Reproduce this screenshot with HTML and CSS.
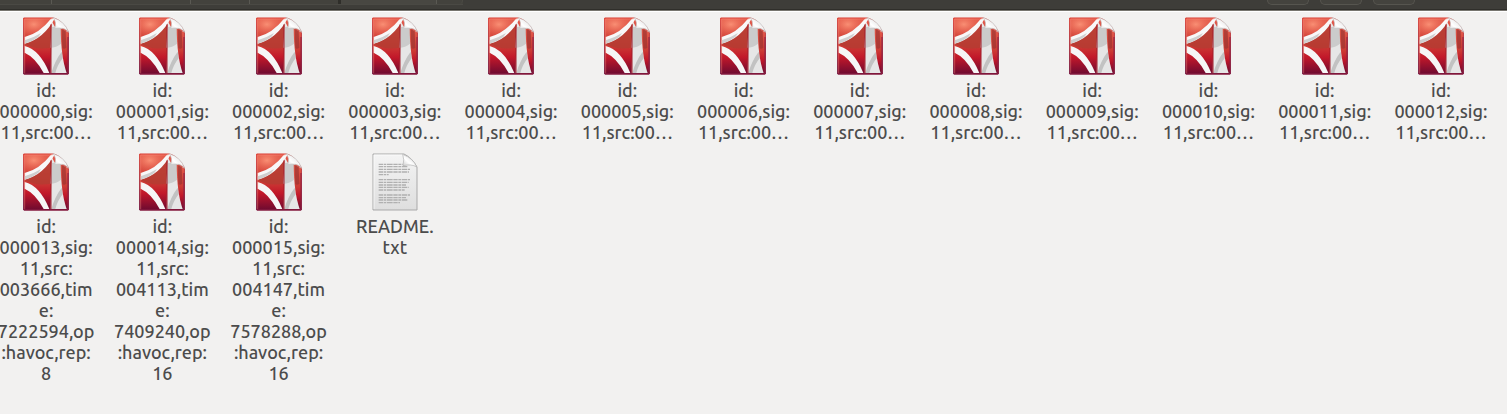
FILE: index.html
```html
<!DOCTYPE html>
<html lang="en">
<head>
<meta charset="utf-8">
<title>Files</title>
<link rel="stylesheet" href="styles.css">
</head>
<body>
<svg class="defs" aria-hidden="true">
  <defs>
    <linearGradient id="red" x1="0" y1="0" x2="0" y2="1">
      <stop offset="0" stop-color="#e45c4c"/><stop offset=".5" stop-color="#cc3a34"/>
      <stop offset=".7" stop-color="#c2182a"/><stop offset="1" stop-color="#6d0a30"/>
    </linearGradient>
    <radialGradient id="glow" cx=".35" cy=".3" r=".7">
      <stop offset="0" stop-color="#f98f74"/><stop offset="1" stop-color="#ea6450" stop-opacity="0"/>
    </radialGradient>
    <linearGradient id="fold" x1="0" y1="1" x2="1" y2="0">
      <stop offset="0" stop-color="#c4c4c4"/><stop offset=".4" stop-color="#fff"/><stop offset="1" stop-color="#d4d4d4"/>
    </linearGradient>
    <linearGradient id="edge" x1="0" y1="0" x2="0" y2="1">
      <stop offset="0" stop-color="#d93a30"/><stop offset="1" stop-color="#74103a"/>
    </linearGradient>
    <linearGradient id="paper" x1="0" y1="0" x2="0" y2="1">
      <stop offset="0" stop-color="#f4f4f4"/><stop offset="1" stop-color="#dedede"/>
    </linearGradient>
    <symbol id="pdf" viewBox="0 0 138 174">
      <path d="M2 3H92Q118 10 136 44V171H2Z" fill="url(#red)" stroke="url(#edge)" stroke-width="3"/>
      <path d="M4 5H86Q50 54 4 62Z" fill="url(#glow)"/>
      <path d="M6 76Q54 58 86 20L82 92Q40 100 6 82Z" fill="#b33c32" opacity=".8"/>
      <path d="M86 12L96 30 134 44V168H83Z" fill="#e6e6e6"/>
      <path d="M86 30H118L114 80Q100 92 82 92Z" fill="#cbcbcb"/>
      <path d="M116 104L119 124Q104 142 97 168H85Q95 132 116 104Z" fill="#c2c2c2"/>
      <path d="M113 34L135 46V168H131Q114 122 113 34Z" fill="url(#red)"/>
      <path d="M116 36L128 42 130 92Q122 98 118 92Z" fill="#9c3430" opacity=".7"/>
      <path d="M5 60Q50 48 84 5L96 3Q62 66 5 80Z" fill="#f8f8f8"/>
      <path d="M5 70Q32 62 54 48L46 60Q28 74 5 80Z" fill="#cfcfcf"/>
      <path d="M5 87Q50 98 79 168H62Q38 122 5 107Z" fill="#f6f6f6"/>
      <path d="M84 22V169" stroke="#a01c2b" stroke-width="3"/>
      <path d="M5 169V6H88" fill="none" stroke="#ff9484" stroke-width="2" opacity=".6"/>
      <path d="M90 2Q102 14 95 35Q124 28 137 46Q126 12 90 2Z" fill="url(#fold)" stroke="#c4c4c4" stroke-width="2"/>
      <path d="M3 171H135V60" fill="none" stroke="#8d2142" stroke-width="3"/>
    </symbol>
    <symbol id="text" viewBox="0 0 138 174">
      <path d="M3 3H96Q120 14 135 42V171H3Z" fill="url(#paper)" stroke="#a9a9a9" stroke-width="3"/>
      <path d="M6 168V6H94" fill="none" stroke="#fff" stroke-width="2"/>
      <path d="M20 34H92M20 41H108M20 49H114M20 57H111M20 65H50M20 80H114M20 88H110M20 96H102M20 103H110M20 111H98M20 126H114M20 134H102M20 141H108M20 149H84" stroke="#b0b0b0" stroke-width="4" stroke-dasharray="13 2 8 2 17 2"/>
      <path d="M92 4Q98 20 93 38Q119 32 134 42Q124 16 92 4Z" fill="url(#fold)" stroke="#b0b0b0" stroke-width="2"/>
    </symbol>
  </defs>
</svg>
<header class="toolbar">
  <div class="path"><span class="crumb home"></span><span class="crumb long"></span><span class="crumb short"></span><span class="crumb medium"></span><span class="crumb current"></span><span class="path-end"></span></div>
  <div class="tools"><span class="tool"></span><span class="tool"></span><span class="tool"></span></div>
</header>
<main>
<ul class="files">
  <li class="file"><svg class="icon"><use href="#pdf"/></svg><span class="name">id:<br>000000,sig:<br>11,src:00…</span></li>
  <li class="file"><svg class="icon"><use href="#pdf"/></svg><span class="name">id:<br>000001,sig:<br>11,src:00…</span></li>
  <li class="file"><svg class="icon"><use href="#pdf"/></svg><span class="name">id:<br>000002,sig:<br>11,src:00…</span></li>
  <li class="file"><svg class="icon"><use href="#pdf"/></svg><span class="name">id:<br>000003,sig:<br>11,src:00…</span></li>
  <li class="file"><svg class="icon"><use href="#pdf"/></svg><span class="name">id:<br>000004,sig:<br>11,src:00…</span></li>
  <li class="file"><svg class="icon"><use href="#pdf"/></svg><span class="name">id:<br>000005,sig:<br>11,src:00…</span></li>
  <li class="file"><svg class="icon"><use href="#pdf"/></svg><span class="name">id:<br>000006,sig:<br>11,src:00…</span></li>
  <li class="file"><svg class="icon"><use href="#pdf"/></svg><span class="name">id:<br>000007,sig:<br>11,src:00…</span></li>
  <li class="file"><svg class="icon"><use href="#pdf"/></svg><span class="name">id:<br>000008,sig:<br>11,src:00…</span></li>
  <li class="file"><svg class="icon"><use href="#pdf"/></svg><span class="name">id:<br>000009,sig:<br>11,src:00…</span></li>
  <li class="file"><svg class="icon"><use href="#pdf"/></svg><span class="name">id:<br>000010,sig:<br>11,src:00…</span></li>
  <li class="file"><svg class="icon"><use href="#pdf"/></svg><span class="name">id:<br>000011,sig:<br>11,src:00…</span></li>
  <li class="file"><svg class="icon"><use href="#pdf"/></svg><span class="name">id:<br>000012,sig:<br>11,src:00…</span></li>
  <li class="file"><svg class="icon"><use href="#pdf"/></svg><span class="name">id:<br>000013,sig:<br>11,src:<br>003666,tim<br>e:<br>7222594,op<br>:havoc,rep:<br>8</span></li>
  <li class="file"><svg class="icon"><use href="#pdf"/></svg><span class="name">id:<br>000014,sig:<br>11,src:<br>004113,tim<br>e:<br>7409240,op<br>:havoc,rep:<br>16</span></li>
  <li class="file"><svg class="icon"><use href="#pdf"/></svg><span class="name">id:<br>000015,sig:<br>11,src:<br>004147,tim<br>e:<br>7578288,op<br>:havoc,rep:<br>16</span></li>
  <li class="file"><svg class="icon"><use href="#text"/></svg><span class="name">README.<br>txt</span></li>
</ul>
</main>
</body>
</html>
```
FILE: styles.css
```css
* { box-sizing: border-box; }

body {
  margin: 0;
  min-height: 100vh;
  overflow-x: hidden;
  background: #f2f1f0;
  color: #4c4c4c;
  font-family: Ubuntu, "Noto Sans", "Open Sans", sans-serif;
  font-size: 18px;
  font-weight: 500;
  line-height: 21px;
}

.defs { display: block; width: 0; height: 0; }

.toolbar {
  display: flex;
  justify-content: space-between;
  height: 11px;
  padding-right: 92px;
  background: #3e3d39;
  border-bottom: 1px solid #77756f;
  box-shadow: inset 0 -1px #2f2e2a, 0 1px #fff;
}

.path { display: flex; height: 5px; background: #43423d; border-bottom: 1px solid #4a4944; }
.crumb { border-right: 1px solid #5a5953; }
.home { width: 52px; }
.long { width: 139px; }
.short { width: 59px; }
.medium { width: 91px; border-right: 3px solid #2f2e2a; }
.current { width: 96px; background: #484742; }
.path-end { width: 26px; border-right: 1px solid #4b4a45; border-bottom-right-radius: 4px; }

.tools { display: flex; gap: 11px; }
.tool {
  width: 42px;
  height: 5px;
  border: 1px solid #56554f;
  border-top: 0;
  border-radius: 0 0 5px 5px;
  background: #44433e;
}

/* The grid is scrolled slightly past the left edge of the view. */
.files {
  display: grid;
  grid-template-columns: repeat(13, 1fr);
  row-gap: 10px;
  margin: 0 8px 0 -12px;
  padding: 6px 0;
  list-style: none;
}

.file { display: flex; flex-direction: column; align-items: center; gap: 5px; }
.icon { display: block; width: 46px; height: 58px; }
.name { text-align: center; white-space: nowrap; }
```
